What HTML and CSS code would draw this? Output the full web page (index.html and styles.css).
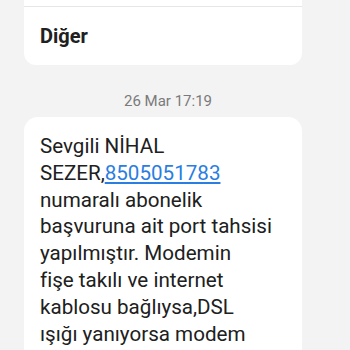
FILE: index.html
```html
<!DOCTYPE html>
<html lang="tr">
<head>
    <meta charset="UTF-8">
    <title>Mesajlar</title>
    <meta name="viewport" content="width=device-width, initial-scale=1.0">
    <link rel="stylesheet" href="styles.css">
</head>
<body>

<div class="page">
    <div class="card">
        <div class="card-row top-row"></div>
        <div class="card-row title-row">Diğer</div>
    </div>

    <div class="time">26 Mar 17:19</div>

    <div class="bubble">
        Sevgili NİHAL<br>
        SEZER,<a href="#">8505051783</a><br>
        numaralı abonelik<br>
        başvuruna ait port tahsisi<br>
        yapılmıştır. Modemin<br>
        fişe takılı ve internet<br>
        kablosu bağlıysa,DSL<br>
        ışığı yanıyorsa modem<br>
        kurulumunu gerçekleştirebilirsiniz.
    </div>
</div>

</body>
</html>
```

FILE: styles.css
```css
:root {
    --fundo: #f3f3f3;
    --texto: #202020;
    --cinza: #7a7a7a;
    --link: #2a7de1;
}

body {
    margin: 0;
    padding: 0;
    background-color: var(--fundo);
    font-family: Roboto, 'Noto Sans', sans-serif;
    color: var(--texto);
    overflow: hidden;
}

.page {
    width: 278px;
    padding-left: 24px;
}

.card {
    background-color: #fff;
    border-radius: 0 0 12px 12px;
}

.top-row {
    height: 6px;
    border-bottom: 1px solid #e6e6e6;
}

.title-row {
    height: 58px;
    padding-left: 16px;
    font-size: 20px;
    font-weight: bold;
    line-height: 20px;
    display: flex;
    align-items: center;
}

.time {
    text-align: center;
    font-size: 15px;
    color: var(--cinza);
    margin-top: 26px;
    margin-left: 10px;
    line-height: 20px;
}

.bubble {
    background-color: #fff;
    border-radius: 14px;
    margin-top: 6px;
    padding: 16px 10px 20px 16px;
    font-size: 20.6px;
    line-height: 26.8px;
    width: 252px;
    overflow: hidden;
    white-space: nowrap;
}

.bubble a {
    color: var(--link);
    text-decoration: underline;
}
```
